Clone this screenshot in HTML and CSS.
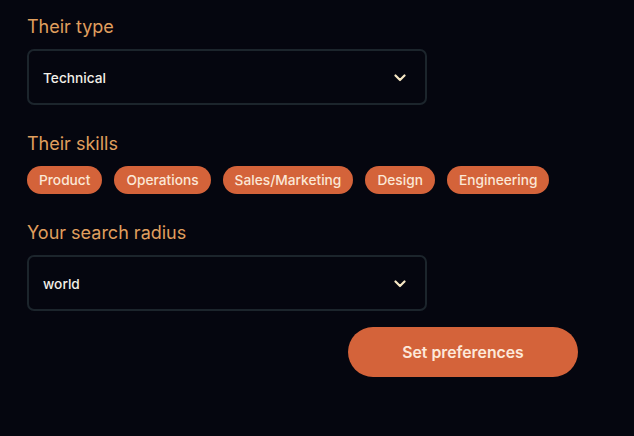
FILE: index.html
```html
<!DOCTYPE html>
<html>
<head>
<meta charset="utf-8">
<link rel="stylesheet" href="styles.css">
</head>
<body>
<div class="form">
  <div class="field">
    <div class="label">Their type</div>
    <div class="select">
      <span class="value">Technical</span>
      <svg class="chev" width="12" height="8" viewBox="0 0 12 8"><path d="M1.5 1.5 L6 6 L10.5 1.5" fill="none" stroke="#f6e7c4" stroke-width="2.2" stroke-linecap="round" stroke-linejoin="round"/></svg>
    </div>
  </div>
  <div class="field">
    <div class="label">Their skills</div>
    <div class="chips">
      <span class="chip">Product</span>
      <span class="chip">Operations</span>
      <span class="chip">Sales/Marketing</span>
      <span class="chip">Design</span>
      <span class="chip">Engineering</span>
    </div>
  </div>
  <div class="field">
    <div class="label">Your search radius</div>
    <div class="select">
      <span class="value">world</span>
      <svg class="chev" width="12" height="8" viewBox="0 0 12 8"><path d="M1.5 1.5 L6 6 L10.5 1.5" fill="none" stroke="#f6e7c4" stroke-width="2.2" stroke-linecap="round" stroke-linejoin="round"/></svg>
    </div>
  </div>
  <div class="actions">
    <button class="btn">Set preferences</button>
  </div>
</div>
</body>
</html>
```

FILE: styles.css
```css
html, body {
  margin: 0;
  padding: 0;
  background: #05060f;
  font-family: Inter, "Noto Sans", sans-serif;
}
.form {
  width: 551px;
  padding: 15px 0 0 27px;
  display: flex;
  flex-direction: column;
}
.field {
  display: flex;
  flex-direction: column;
  gap: 10px;
  margin-bottom: 27px;
}
.label {
  color: #e09f5e;
  font-size: 18px;
  line-height: 24px;
}
.select {
  box-sizing: border-box;
  width: 400px;
  height: 56px;
  border: 2px solid #1c252c;
  border-radius: 7px;
  display: flex;
  align-items: center;
  justify-content: space-between;
  padding: 2px 19px 0 14px;
}
.value {
  color: #f2efe8;
  font-size: 13.7px;
  font-weight: 500;
}
.chev {
  display: block;
}
.chips {
  display: flex;
  gap: 12px;
}
.chip {
  background: #d4633a;
  color: #fbe7d6;
  font-size: 13.72px;
  font-weight: 500;
  line-height: 28px;
  height: 28px;
  padding: 0 12px;
  border-radius: 14px;
}
.actions {
  display: flex;
  justify-content: flex-end;
  margin-top: -11px;
}
.btn {
  width: 230px;
  height: 50px;
  border: none;
  border-radius: 25px;
  background: #d4633a;
  color: #fde9da;
  font-family: Inter, "Noto Sans", sans-serif;
  font-size: 15.8px;
  font-weight: 600;
}
```
